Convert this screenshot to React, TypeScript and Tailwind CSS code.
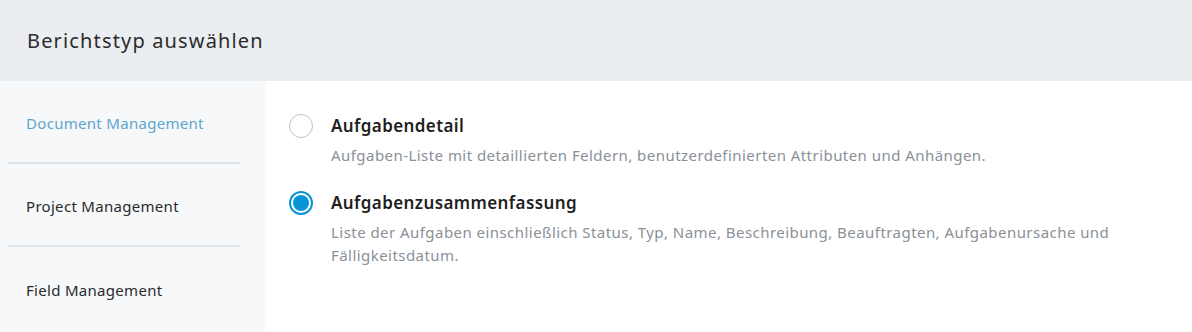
import React, { useState } from 'react';

const categories = ['Document Management', 'Project Management', 'Field Management'];

const reportTypes = [
  {
    id: 'detail',
    title: 'Aufgabendetail',
    description: 'Aufgaben-Liste mit detaillierten Feldern, benutzerdefinierten Attributen und Anhängen.',
  },
  {
    id: 'summary',
    title: 'Aufgabenzusammenfassung',
    description:
      'Liste der Aufgaben einschließlich Status, Typ, Name, Beschreibung, Beauftragten, Aufgabenursache und Fälligkeitsdatum.',
  },
];

function Radio({ checked }: { checked: boolean }) {
  if (checked) {
    return (
      <span className="flex h-[24px] w-[24px] shrink-0 items-center justify-center rounded-full border-2 border-[#0696d7] bg-white">
        <span className="block h-[16px] w-[16px] rounded-full bg-[#0696d7]" />
      </span>
    );
  }
  return <span className="block h-[24px] w-[24px] shrink-0 rounded-full border border-[#bcc2c8] bg-white" />;
}

export default function App() {
  const [active] = useState(0);
  const [selected, setSelected] = useState('summary');

  return (
    <div className="flex h-[332px] w-[1192px] flex-col bg-white font-['Noto_Sans',sans-serif] text-[#3c3c3c]">
      {/* Header */}
      <div className="flex h-[81px] shrink-0 items-center bg-[#ebeef1] px-[27px]">
        <h1 className="text-[20px] font-normal tracking-[1.15px] text-[#2b2b2b]">Berichtstyp auswählen</h1>
      </div>

      <div className="flex flex-1">
        {/* Sidebar */}
        <div className="w-[265px] shrink-0 bg-[#f6f8fa] pl-[8px] pr-[25px]">
          {categories.map((c, i) => (
            <div
              key={c}
              className={`flex h-[83px] items-center px-[18px] pt-[4px] text-[15px] tracking-[0.3px] ${
                i < categories.length - 1 ? 'border-b-2 border-[#e0e3e7]' : ''
              } ${i === active ? 'text-[#5ea6cc]' : 'text-[#2b2b2b]'}`}
            >
              {c}
            </div>
          ))}
        </div>

        {/* Options */}
        <div className="flex flex-col gap-[23px] pl-[24px] pt-[32px]">
          {reportTypes.map((r) => (
            <label key={r.id} className="flex cursor-pointer gap-[18px]" onClick={() => setSelected(r.id)}>
              <div className="pt-[1px]">
                <Radio checked={selected === r.id} />
              </div>
              <div className="flex w-[800px] flex-col">
                <span className="text-[17px] font-semibold leading-[26px] tracking-[0.4px] text-[#1f1f1f]">
                  {r.title}
                </span>
                <span className="mt-[5px] text-[15px] leading-[23px] tracking-[0.45px] text-[#8a9097]">
                  {r.description}
                </span>
              </div>
            </label>
          ))}
        </div>
      </div>
    </div>
  );
}
